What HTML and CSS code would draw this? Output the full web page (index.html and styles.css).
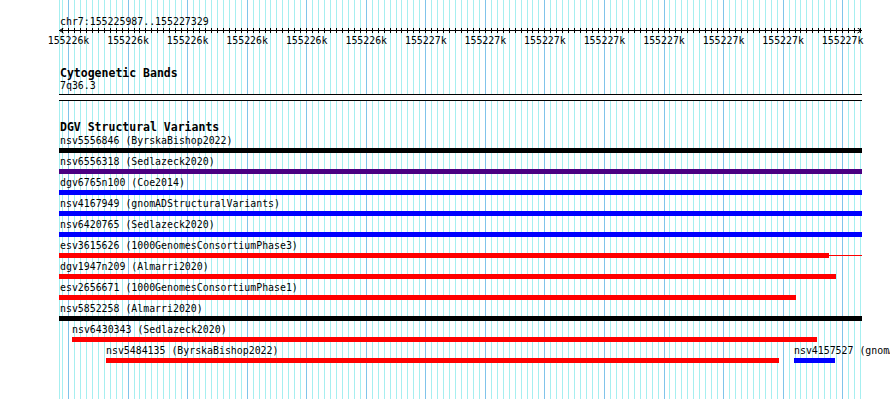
FILE: index.html
```html
<!DOCTYPE html>
<html lang="en">
<head>
    <meta charset="UTF-8">
    <meta name="viewport" content="width=device-width, initial-scale=1.0">
    <title>chr7:155225987..155227329</title>
    <link rel="stylesheet" href="styles.css">
</head>
<body>
    <div class="lgv">
        <svg class="gridlines" id="grid" width="890" height="399"></svg>

        <div class="ruler">
            <div class="loc">chr7:155225987..155227329</div>
            <svg class="scale" id="scale" width="890" height="22"></svg>
        </div>

        <section class="track cyto">
            <h3 class="track-title">Cytogenetic Bands</h3>
            <div class="band-name">7q36.3</div>
            <div class="band"></div>
        </section>

        <section class="track dgv">
            <h3 class="track-title">DGV Structural Variants</h3>
            <div class="feature-list">
                <div class="feature-row">
                    <div class="feature clipped" style="left:0">
                        <div class="feature-label">nsv5556846 (ByrskaBishop2022)</div>
                        <div class="glyph"><div class="block complex" style="width:803px"></div></div>
                    </div>
                </div>
                <div class="feature-row">
                    <div class="feature clipped" style="left:0">
                        <div class="feature-label">nsv6556318 (Sedlazeck2020)</div>
                        <div class="glyph"><div class="block gain-loss" style="width:803px"></div></div>
                    </div>
                </div>
                <div class="feature-row">
                    <div class="feature clipped" style="left:0">
                        <div class="feature-label">dgv6765n100 (Coe2014)</div>
                        <div class="glyph"><div class="block gain" style="width:803px"></div></div>
                    </div>
                </div>
                <div class="feature-row">
                    <div class="feature clipped" style="left:0">
                        <div class="feature-label">nsv4167949 (gnomADStructuralVariants)</div>
                        <div class="glyph"><div class="block gain" style="width:803px"></div></div>
                    </div>
                </div>
                <div class="feature-row">
                    <div class="feature clipped" style="left:0">
                        <div class="feature-label">nsv6420765 (Sedlazeck2020)</div>
                        <div class="glyph"><div class="block gain" style="width:803px"></div></div>
                    </div>
                </div>
                <div class="feature-row">
                    <div class="feature clipped" style="left:0;width:803px">
                        <div class="feature-label">esv3615626 (1000GenomesConsortiumPhase3)</div>
                        <div class="glyph">
                            <div class="block loss" style="width:770px"></div>
                            <div class="thin loss"></div>
                        </div>
                    </div>
                </div>
                <div class="feature-row">
                    <div class="feature clipped" style="left:0">
                        <div class="feature-label">dgv1947n209 (Almarri2020)</div>
                        <div class="glyph"><div class="block loss" style="width:777px"></div></div>
                    </div>
                </div>
                <div class="feature-row">
                    <div class="feature clipped" style="left:0">
                        <div class="feature-label">esv2656671 (1000GenomesConsortiumPhase1)</div>
                        <div class="glyph"><div class="block loss" style="width:737px"></div></div>
                    </div>
                </div>
                <div class="feature-row">
                    <div class="feature clipped" style="left:0">
                        <div class="feature-label">nsv5852258 (Almarri2020)</div>
                        <div class="glyph"><div class="block complex" style="width:803px"></div></div>
                    </div>
                </div>
                <div class="feature-row">
                    <div class="feature" style="left:13px">
                        <div class="feature-label">nsv6430343 (Sedlazeck2020)</div>
                        <div class="glyph"><div class="block loss" style="width:745px"></div></div>
                    </div>
                </div>
                <div class="feature-row">
                    <div class="feature" style="left:47px">
                        <div class="feature-label">nsv5484135 (ByrskaBishop2022)</div>
                        <div class="glyph"><div class="block loss" style="width:673px"></div></div>
                    </div>
                    <div class="feature" style="left:735px">
                        <div class="feature-label">nsv4157527 (gnomADStructuralVariants)</div>
                        <div class="glyph"><div class="block gain" style="width:41px"></div></div>
                    </div>
                </div>
            </div>
        </section>
    </div>

    <script src="script.js"></script>
</body>
</html>
```

FILE: styles.css
```css
body {
    margin: 0;
    padding: 0;
    background-color: #fff;
    color: #000;
    font-family: 'DejaVu Sans Mono', 'Liberation Mono', monospace;
}

.lgv {
    position: relative;
    width: 890px;
    height: 399px;
    overflow: hidden;
}

.gridlines {
    position: absolute;
    top: 0;
    left: 0;
}

.gridlines .minor {
    fill: #a6eff0;
}

.gridlines .major {
    fill: #80c4ea;
}

.ruler {
    position: relative;
}

.loc {
    margin: 16px 0 0 60px;
    font-size: 9.9px;
    line-height: 12px;
}

.scale {
    display: block;
}

.scale text {
    font-family: 'DejaVu Sans Mono', monospace;
    font-size: 9.9px;
    fill: #000;
}

.scale .arrow {
    fill: none;
    stroke: #000;
    stroke-width: 1;
}

.track {
    position: relative;
    margin-left: 59px;
    width: 803px;
}

.track-title {
    margin: 0;
    padding-left: 1px;
    font-size: 11.5px;
    line-height: 13px;
    font-weight: bold;
}

.cyto {
    margin-top: 17px;
}

.band-name {
    padding-left: 1px;
    font-size: 9.9px;
    line-height: 12px;
}

.band {
    margin-top: 2px;
    height: 5px;
    border-top: 1px solid #000;
    border-bottom: 1px solid #000;
    background-color: #fff;
}

.dgv {
    margin-top: 20px;
}

.feature-list {
    padding-top: 1px;
}

.feature-row {
    position: relative;
    height: 21px;
}

.feature {
    position: absolute;
    top: 0;
}

.feature-label {
    font-size: 9.9px;
    line-height: 12px;
    white-space: nowrap;
}

.feature.clipped .feature-label {
    padding-left: 1px;
}

.glyph {
    display: flex;
    align-items: center;
    height: 5px;
    margin-top: 1px;
}

.block {
    flex: none;
    height: 5px;
}

.thin {
    flex: 1;
    height: 1px;
}

.complex {
    background-color: #000;
}

.gain-loss {
    background-color: #4b0082;
}

.gain {
    background-color: #0000ff;
}

.loss {
    background-color: #ff0000;
}
```

FILE: script.js
```js
// view spans x 59..861, minor gridline every 5.955px, major every 10th
const SVGNS = 'http://www.w3.org/2000/svg';
const viewLeft = 59;
const viewRight = 861;
const majorStart = 68;
const minorStep = 5.955;

function addRect(svg, x, y, w, h, cls) {
    const r = document.createElementNS(SVGNS, 'rect');
    r.setAttribute('x', x);
    r.setAttribute('y', y);
    r.setAttribute('width', w);
    r.setAttribute('height', h);
    if (cls) r.setAttribute('class', cls);
    svg.appendChild(r);
}

const grid = document.getElementById('grid');
const scale = document.getElementById('scale');

addRect(grid, viewLeft, 0, 1, 399, 'minor');

for (let k = -1; ; k++) {
    const x = Math.round(majorStart + minorStep * k);
    if (x > viewRight) break;
    addRect(grid, x, 0, 1, 399, k >= 0 && k % 10 === 0 ? 'major' : 'minor');
    addRect(scale, x, 0, 1, 5);
}

// ruler line + arrow heads
addRect(scale, viewLeft, 2, viewRight - viewLeft + 1, 1);

const arrows = ['63.5,0 59.5,2.5 63.5,5', '857.5,0 861.5,2.5 857.5,5'];
arrows.forEach(function (pts) {
    const p = document.createElementNS(SVGNS, 'polyline');
    p.setAttribute('points', pts);
    p.setAttribute('class', 'arrow');
    scale.appendChild(p);
});

// tick labels on the major gridlines
for (let k = 0; k < 14; k++) {
    const t = document.createElementNS(SVGNS, 'text');
    t.setAttribute('x', majorStart + minorStep * 10 * k + 0.5);
    t.setAttribute('y', 16);
    t.setAttribute('text-anchor', 'middle');
    t.textContent = k < 6 ? '155226k' : '155227k';
    scale.appendChild(t);
}
```
